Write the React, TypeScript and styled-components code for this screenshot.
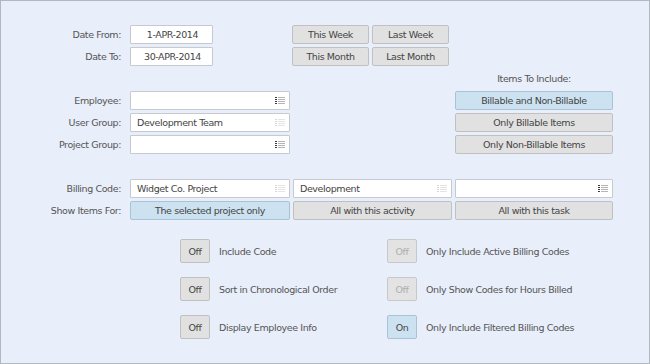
import React from "react";
import styled, { createGlobalStyle, css } from "styled-components";

const GlobalStyle = createGlobalStyle`
  html, body { margin: 0; padding: 0; background: #ffffff; }
  * { box-sizing: border-box; }
`;

const Frame = styled.div`
  width: 650px;
  height: 364px;
  border: 1px solid #b3b7bf;
  background: #e8eefa;
  padding-top: 24px;
  font-family: "DejaVu Sans", Verdana, sans-serif;
  font-size: 9.5px;
  letter-spacing: -0.4px;
  color: #555;
`;

const FormGrid = styled.div`
  display: grid;
  grid-template-columns: 126px 160px 159px 158px;
  grid-auto-rows: 19px;
  column-gap: 3px;
  row-gap: 3px;
`;

const Label = styled.div`
  display: flex;
  align-items: center;
  justify-content: flex-end;
  padding-right: 6px;
  color: #555;
`;

const Empty = styled.div<{ $span?: boolean }>`
  ${(p) => p.$span && css`grid-column: 1 / -1;`}
`;

const Caption = styled.div`
  display: flex;
  align-items: center;
  justify-content: center;
  color: #555;
`;

const InputBox = styled.div<{ $narrow?: boolean; $center?: boolean }>`
  display: flex;
  align-items: center;
  justify-content: ${(p) => (p.$center ? "center" : "space-between")};
  width: ${(p) => (p.$narrow ? "83px" : "100%")};
  height: 19px;
  background: #ffffff;
  border: 1px solid #c6cad0;
  border-radius: 1px;
  padding: 0 4px 0 6px;
  color: #444;
`;

const Button = styled.div<{ $active?: boolean }>`
  display: flex;
  align-items: center;
  justify-content: center;
  height: 19px;
  border-radius: 2px;
  border: 1px solid ${(p) => (p.$active ? "#a9c2d6" : "#c0c0c0")};
  background: ${(p) => (p.$active ? "#cde2f1" : "#e1e1e1")};
  color: #444;
`;

const QuickPair = styled.div`
  display: grid;
  grid-template-columns: 77px 77px;
  column-gap: 3px;
  margin-left: -1px;
`;

const ToggleGrid = styled.div`
  display: grid;
  grid-template-columns: 207px 240px;
  grid-auto-rows: 24px;
  row-gap: 14px;
  margin: 19px 0 0 179px;
`;

const ToggleItem = styled.div`
  display: flex;
  align-items: center;
  gap: 9px;
`;

const Toggle = styled.div<{ $on?: boolean; $disabled?: boolean }>`
  display: flex;
  align-items: center;
  justify-content: center;
  width: 30px;
  height: 24px;
  border-radius: 2px;
  border: 1px solid ${(p) => (p.$on ? "#a9c2d6" : p.$disabled ? "#c8c8c8" : "#c0c0c0")};
  background: ${(p) => (p.$on ? "#cde2f1" : p.$disabled ? "#e3e3e3" : "#e1e1e1")};
  color: ${(p) => (p.$disabled ? "#aeaeae" : "#444")};
`;

const ToggleText = styled.span`
  color: #555;
`;

const ListIcon = ({ faded }: { faded?: boolean }) => {
  const dot = faded ? "#d8d8d8" : "#3a3a3a";
  const line = faded ? "#e4e4e4" : "#b4b4b4";
  return (
    <svg width="10" height="9" viewBox="0 0 10 9" style={{ display: "block" }}>
      {[0, 2, 4, 6].map((y) => (
        <React.Fragment key={y}>
          <rect x="0" y={y + 1} width="2" height="1" fill={dot} />
          <rect x="3" y={y + 1} width="7" height="1" fill={line} />
        </React.Fragment>
      ))}
    </svg>
  );
};

const Lookup = ({ value, faded }: { value?: string; faded?: boolean }) => (
  <InputBox>
    <span>{value ?? ""}</span>
    <ListIcon faded={faded} />
  </InputBox>
);

export default function App() {
  return (
    <>
      <GlobalStyle />
      <Frame>
        <FormGrid>
          <Label>Date From:</Label>
          <InputBox $narrow $center>1-APR-2014</InputBox>
          <QuickPair>
            <Button>This Week</Button>
            <Button>Last Week</Button>
          </QuickPair>
          <Empty />

          <Label>Date To:</Label>
          <InputBox $narrow $center>30-APR-2014</InputBox>
          <QuickPair>
            <Button>This Month</Button>
            <Button>Last Month</Button>
          </QuickPair>
          <Empty />

          <Empty />
          <Empty />
          <Empty />
          <Caption>Items To Include:</Caption>

          <Label>Employee:</Label>
          <Lookup />
          <Empty />
          <Button $active>Billable and Non-Billable</Button>

          <Label>User Group:</Label>
          <Lookup value="Development Team" faded />
          <Empty />
          <Button>Only Billable Items</Button>

          <Label>Project Group:</Label>
          <Lookup />
          <Empty />
          <Button>Only Non-Billable Items</Button>

          <Empty $span />

          <Label>Billing Code:</Label>
          <Lookup value="Widget Co. Project" faded />
          <Lookup value="Development" faded />
          <Lookup />

          <Label>Show Items For:</Label>
          <Button $active>The selected project only</Button>
          <Button>All with this activity</Button>
          <Button>All with this task</Button>
        </FormGrid>

        <ToggleGrid>
          <ToggleItem>
            <Toggle>Off</Toggle>
            <ToggleText>Include Code</ToggleText>
          </ToggleItem>
          <ToggleItem>
            <Toggle $disabled>Off</Toggle>
            <ToggleText>Only Include Active Billing Codes</ToggleText>
          </ToggleItem>
          <ToggleItem>
            <Toggle>Off</Toggle>
            <ToggleText>Sort in Chronological Order</ToggleText>
          </ToggleItem>
          <ToggleItem>
            <Toggle $disabled>Off</Toggle>
            <ToggleText>Only Show Codes for Hours Billed</ToggleText>
          </ToggleItem>
          <ToggleItem>
            <Toggle>Off</Toggle>
            <ToggleText>Display Employee Info</ToggleText>
          </ToggleItem>
          <ToggleItem>
            <Toggle $on>On</Toggle>
            <ToggleText>Only Include Filtered Billing Codes</ToggleText>
          </ToggleItem>
        </ToggleGrid>
      </Frame>
    </>
  );
}
